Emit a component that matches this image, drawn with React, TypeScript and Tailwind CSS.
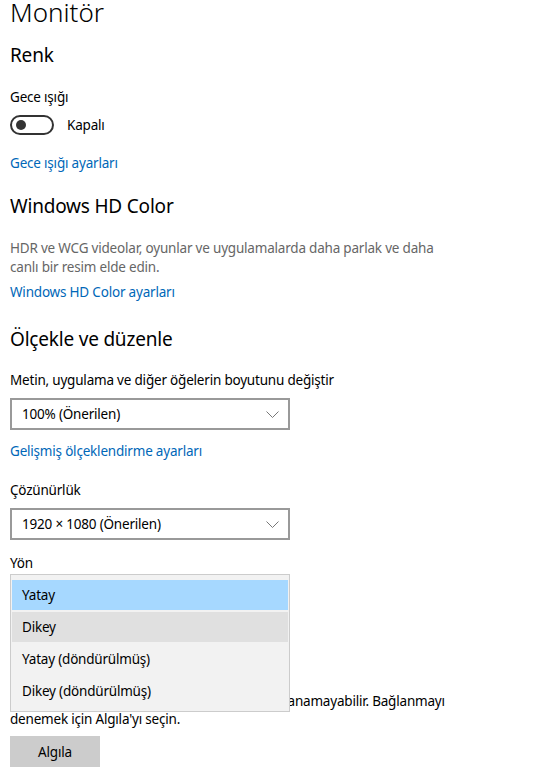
import React from 'react';

const font = { fontFamily: '"Noto Sans", "Open Sans", sans-serif' };

function Chevron() {
  return (
    <svg width="13" height="7" viewBox="0 0 13 7" className="shrink-0">
      <path d="M0.5 0.5 L6.5 6.5 L12.5 0.5" fill="none" stroke="#777" strokeWidth="1" />
    </svg>
  );
}

function Select({ value }: { value: string }) {
  return (
    <div className="flex h-[32px] w-[280px] items-center justify-between border-2 border-[#999] bg-white pl-[10px] pr-[9px] text-[13.5px] tracking-[-0.2px] text-black">
      <span>{value}</span>
      <Chevron />
    </div>
  );
}

function Link({ children }: { children: React.ReactNode }) {
  return <div className="text-[13.5px] leading-[20px] tracking-[-0.2px] text-[#0067b8]">{children}</div>;
}

const options = ['Yatay', 'Dikey', 'Yatay (döndürülmüş)', 'Dikey (döndürülmüş)'];

export default function App() {
  return (
    <div className="h-[781px] w-[545px] overflow-hidden bg-white pl-[10px] text-black" style={font}>
      <h1 className="-mt-[6px] text-[26px] font-light leading-[36px]">Monitör</h1>

      <h2 className="mt-[11px] text-[19px] leading-[28px] tracking-[-0.2px]">Renk</h2>
      <div className="mt-[18px] text-[13.5px] leading-[20px] tracking-[-0.2px]">Gece ışığı</div>
      <div className="mt-[8px] flex items-center gap-[13px]">
        <div className="flex h-[20px] w-[44px] items-center rounded-full border-2 border-[#333] pl-[4px]">
          <div className="h-[10px] w-[10px] rounded-full bg-[#333]" />
        </div>
        <span className="text-[13.5px] tracking-[-0.2px]">Kapalı</span>
      </div>
      <div className="mt-[18px]">
        <Link>Gece ışığı ayarları</Link>
      </div>

      <h2 className="mt-[19px] text-[19px] leading-[28px] tracking-[-0.2px]">Windows HD Color</h2>
      <p className="mt-[19px] w-[445px] text-[13.5px] leading-[19px] tracking-[-0.2px] text-[#666]">
        HDR ve WCG videolar, oyunlar ve uygulamalarda daha parlak ve daha canlı bir resim elde edin.
      </p>
      <div className="mt-[5px]">
        <Link>Windows HD Color ayarları</Link>
      </div>

      <h2 className="mt-[23px] text-[19px] leading-[28px] tracking-[-0.2px]">Ölçekle ve düzenle</h2>
      <div className="mt-[17px] text-[13.5px] leading-[20px] tracking-[-0.2px]">Metin, uygulama ve diğer öğelerin boyutunu değiştir</div>
      <div className="mt-[8px]">
        <Select value="100% (Önerilen)" />
      </div>
      <div className="mt-[11px]">
        <Link>Gelişmiş ölçeklendirme ayarları</Link>
      </div>

      <div className="mt-[19px] text-[13.5px] leading-[20px] tracking-[-0.2px]">Çözünürlük</div>
      <div className="mt-[8px]">
        <Select value="1920 × 1080 (Önerilen)" />
      </div>

      <div className="mt-[13px] text-[13.5px] leading-[20px] tracking-[-0.2px]">Yön</div>
      <div className="relative mt-[5px]">
        <Select value="Yatay" />
        {/* open orientation list */}
        <div className="absolute -top-[4px] left-0 z-10 w-[280px] border border-[#ccc] bg-[#f2f2f2] px-[1px] py-[5px] text-[13.5px] tracking-[-0.2px]">
          {options.map((o, i) => (
            <div
              key={o}
              className={
                i === 0
                  ? 'mb-[2px] flex h-[30px] items-center bg-[#a6d8ff] pl-[10px]'
                  : i === 1
                    ? 'flex h-[30px] items-center bg-[#e0e0e0] pl-[10px]'
                    : 'mt-[2px] flex h-[30px] items-center pl-[10px]'
              }
            >
              {o}
            </div>
          ))}
        </div>
      </div>

      <h2 className="mt-[34px] text-[19px] leading-[28px] tracking-[-0.2px]">Birden çok ekran</h2>
      <p className="mt-[20px] w-[450px] text-[13.5px] leading-[18px] tracking-[-0.2px]">
        Eski ekranlar her zaman otomatik olarak bağlanamayabilir. Bağlanmayı denemek için Algıla'yı seçin.
      </p>
      <button className="mt-[8px] flex h-[31px] w-[90px] items-center justify-center bg-[#ccc] text-[13.5px] tracking-[-0.2px]">
        Algıla
      </button>
    </div>
  );
}
